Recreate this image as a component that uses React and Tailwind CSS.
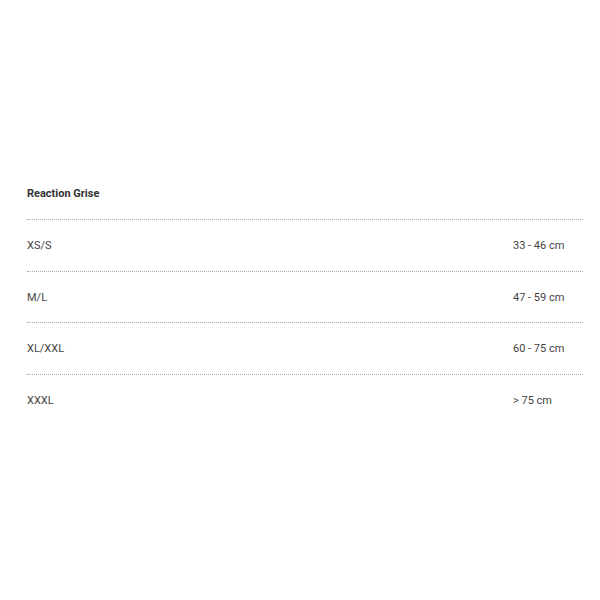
import React from 'react';

const sizes = [
  { label: 'XS/S', range: '33 - 46 cm' },
  { label: 'M/L', range: '47 - 59 cm' },
  { label: 'XL/XXL', range: '60 - 75 cm' },
  { label: 'XXXL', range: '> 75 cm' },
];

const App = () => {
  return (
    <div className="w-[600px] h-[600px] bg-white pt-[185px] pl-[27px]" style={{ fontFamily: 'Roboto, "Liberation Sans", sans-serif' }}>
      <div className="w-[556px]">
        <h3 className="text-[11px] leading-[18px] font-bold text-[#333] pb-[16px] border-b border-dotted border-[#aaa]">
          Reaction Grise
        </h3>
        {sizes.map((s, i) => (
          <div
            key={s.label}
            className={`flex items-center h-[51.5px] pt-[2px] text-[11px] text-[#444] ${i < sizes.length - 1 ? 'border-b border-dotted border-[#aaa]' : ''}`}
          >
            <span className="flex-1">{s.label}</span>
            <span className="w-[70px]">{s.range}</span>
          </div>
        ))}
      </div>
    </div>
  );
};

export default App;
